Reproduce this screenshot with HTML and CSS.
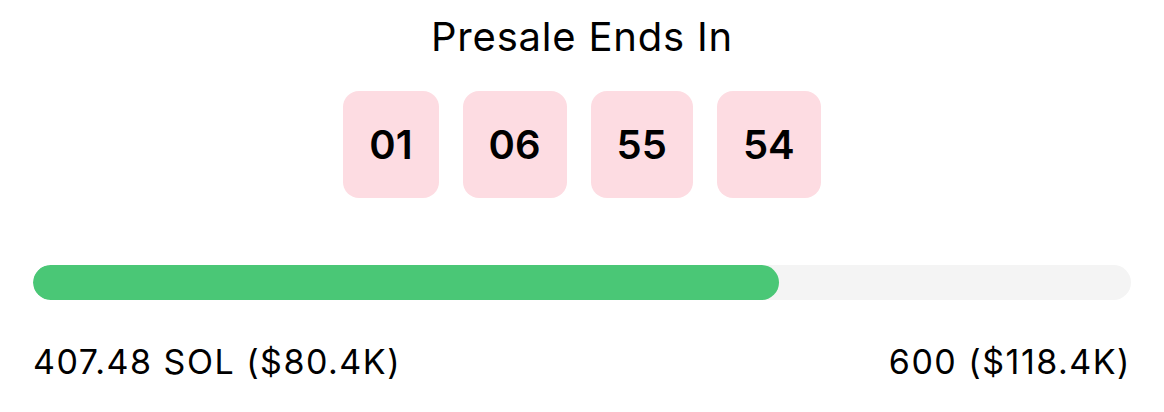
FILE: index.html
```html
<!DOCTYPE html>
<html lang="en">
<head>
<meta charset="utf-8">
<title>Presale</title>
<link rel="stylesheet" href="styles.css">
</head>
<body>
<main class="presale">
  <h2 class="title">Presale Ends In</h2>
  <div class="countdown">
    <div class="unit">01</div>
    <div class="unit">06</div>
    <div class="unit">55</div>
    <div class="unit">54</div>
  </div>
  <div class="progress">
    <div class="progress-fill" style="width: 67.9%"></div>
  </div>
  <div class="labels">
    <span>407.48 SOL ($80.4K)</span>
    <span>600 ($118.4K)</span>
  </div>
</main>
</body>
</html>
```

FILE: styles.css
```css
* { box-sizing: border-box; }
html, body { margin: 0; padding: 0; background: #fff; }
body {
  font-family: Inter, "Noto Sans", "Liberation Sans", sans-serif;
  color: #000;
}
.presale {
  padding: 13px 33px 0 33px;
  display: flex;
  flex-direction: column;
  align-items: stretch;
}
.title {
  margin: 0;
  text-align: center;
  font-size: 40px;
  font-weight: 400;
  line-height: 48px;
  letter-spacing: 0.8px;
}
.countdown {
  margin-top: 30px;
  display: flex;
  justify-content: center;
  gap: 24px;
}
.unit {
  background: #fddce2;
  border-radius: 16px;
  padding: 30px 26px 29px;
  font-size: 40px;
  line-height: 48px;
  font-weight: 600;
}
.progress {
  margin-top: 67px;
  height: 35px;
  border-radius: 18px;
  background: #f4f4f4;
  overflow: hidden;
}
.progress-fill {
  height: 100%;
  background: #4ac776;
  border-radius: 18px;
}
.labels {
  margin-top: 41px;
  display: flex;
  justify-content: space-between;
  font-size: 34px;
  line-height: 41px;
  letter-spacing: 1.5px;
}
```
